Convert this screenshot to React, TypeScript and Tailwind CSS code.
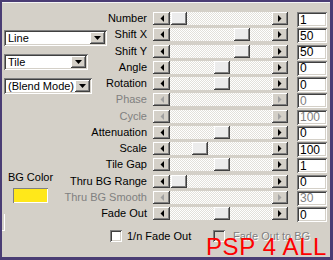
import React from 'react';

interface Row {
  label: string;
  value: string;
  thumb?: number; // px offset of thumb inside the track
  disabled?: boolean;
}

const ROWS: Row[] = [
  { label: 'Number', value: '1', thumb: 1 },
  { label: 'Shift X', value: '50', thumb: 64 },
  { label: 'Shift Y', value: '50', thumb: 64 },
  { label: 'Angle', value: '0', thumb: 44 },
  { label: 'Rotation', value: '0', thumb: 44 },
  { label: 'Phase', value: '0', disabled: true },
  { label: 'Cycle', value: '100', disabled: true },
  { label: 'Attenuation', value: '0', thumb: 44 },
  { label: 'Scale', value: '100', thumb: 22 },
  { label: 'Tile Gap', value: '1', thumb: 44 },
  { label: 'Thru BG Range', value: '0', thumb: 1 },
  { label: 'Thru BG Smooth', value: '30', disabled: true },
  { label: 'Fade Out', value: '0', thumb: 44 },
];

const raised =
  'bg-[#d4d0c8] shadow-[inset_-1px_-1px_#404040,inset_1px_1px_#ffffff,inset_-2px_-2px_#808080]';
const sunken =
  'shadow-[inset_1px_1px_#808080,inset_-1px_-1px_#ffffff,inset_2px_2px_#404040,inset_-2px_-2px_#d4d0c8]';

const Arrow = ({ dir, disabled }: { dir: 'left' | 'right'; disabled?: boolean }) => (
  <svg width="4" height="7" viewBox="0 0 4 7">
    <polygon
      points={dir === 'left' ? '4,0 4,7 0.5,3.5' : '0,0 0,7 3.5,3.5'}
      fill={disabled ? '#a0a0a0' : '#000'}
    />
  </svg>
);

const Select = ({ text, width }: { text: string; width: string }) => (
  <div className={`${width} h-[16px] bg-white ${sunken} flex items-center pl-[4px] pr-[2px]`}>
    <span className="flex-1 text-[11px] leading-none text-black">{text}</span>
    <div className={`w-[15px] h-[12px] ${raised} flex items-center justify-center`}>
      <svg width="7" height="4" viewBox="0 0 7 4">
        <polygon points="0,0 7,0 3.5,4" fill="#000" />
      </svg>
    </div>
  </div>
);

const SliderRow = ({ row }: { row: Row }) => (
  <div className="h-[16.25px] flex items-start">
    <div className="w-[39px] h-[13px] flex justify-end items-center mr-[6px]">
      <span
        className={`whitespace-nowrap text-[11px] leading-none ${
          row.disabled ? 'text-[#808080]' : 'text-black'
        }`}
      >
        {row.label}
      </span>
    </div>
    <div className="w-[135px] h-[13px] flex">
      <div className={`w-[17px] h-full ${raised} flex items-center justify-center`}>
        <Arrow dir="left" disabled={row.disabled} />
      </div>
      <div className="flex-1 h-full relative bg-[repeating-conic-gradient(#ffffff_0_25%,#e2e0da_0_50%)] bg-[length:2px_2px]">
        {row.thumb !== undefined && (
          <div
            className="absolute top-0 w-[16px] h-[13px] bg-[#ececec] shadow-[inset_-1px_-1px_#404040,inset_1px_1px_#ffffff,inset_-2px_-2px_#808080]"
            style={{ left: row.thumb }}
          />
        )}
      </div>
      <div className={`w-[16px] h-full ${raised} flex items-center justify-center`}>
        <Arrow dir="right" disabled={row.disabled} />
      </div>
    </div>
    <div
      className={`ml-[9px] w-[30px] h-[15px] bg-white ${sunken} flex items-center pl-[3px] text-[12px] leading-none ${
        row.disabled ? 'text-[#808080]' : 'text-black'
      }`}
    >
      {row.value}
    </div>
  </div>
);

const Checkbox = ({ disabled }: { disabled?: boolean }) => (
  <div className={`w-[12px] h-[12px] ${disabled ? 'bg-[#d4d0c8]' : 'bg-white'} ${sunken}`} />
);

export default function App() {
  return (
    <div className="w-[333px] h-[260px] bg-[#4a3d74] pt-[2px] pl-[2px] pr-[3px] pb-[3px] font-['Liberation_Sans',Arial,sans-serif]">
      <div className="relative h-full bg-[#d4d0c8] border-t border-[#f4f4f4] flex">
        {/* left column */}
        <div className="w-[106px] pl-[2px] pt-[27px] flex flex-col">
          <Select text="Line" width="w-[103px]" />
          <div className="mt-[8px]">
            <Select text="Tile" width="w-[84px]" />
          </div>
          <div className="mt-[8px]">
            <Select text="(Blend Mode)" width="w-[88px]" />
          </div>
          <div className="mt-[77px] w-[53px] flex flex-col items-center">
            <span className="text-[11px] leading-[13px] text-black whitespace-nowrap">BG Color</span>
            <div className="mt-[4px] w-[35px] h-[15px] bg-[#ffe81a] shadow-[inset_1px_1px_#808080,inset_-1px_-1px_#ffffff]" />
          </div>
          <div className="mt-[11px] -ml-[2px] w-[3px] h-[17px] border-r border-b border-white" />
        </div>

        {/* sliders */}
        <div className="flex-1 pt-[9px] flex flex-col">
          {ROWS.map((r) => (
            <SliderRow key={r.label} row={r} />
          ))}
          <div className="mt-[6.75px] flex items-center">
            <div className="w-[103px] ml-[2px] flex items-center">
              <Checkbox />
              <span className="ml-[5px] text-[11px] leading-none text-black">1/n Fade Out</span>
            </div>
            <Checkbox disabled />
            <span className="ml-[8px] text-[11px] leading-none text-[#808080] [text-shadow:1px_1px_#ffffff]">
              Fade Out to BG
            </span>
          </div>
        </div>

        <span className="absolute left-[204px] top-[232px] text-[24px] leading-[24px] tracking-[0.6px] text-[#ff0000] whitespace-nowrap">
          PSP 4 ALL
        </span>
      </div>
    </div>
  );
}
